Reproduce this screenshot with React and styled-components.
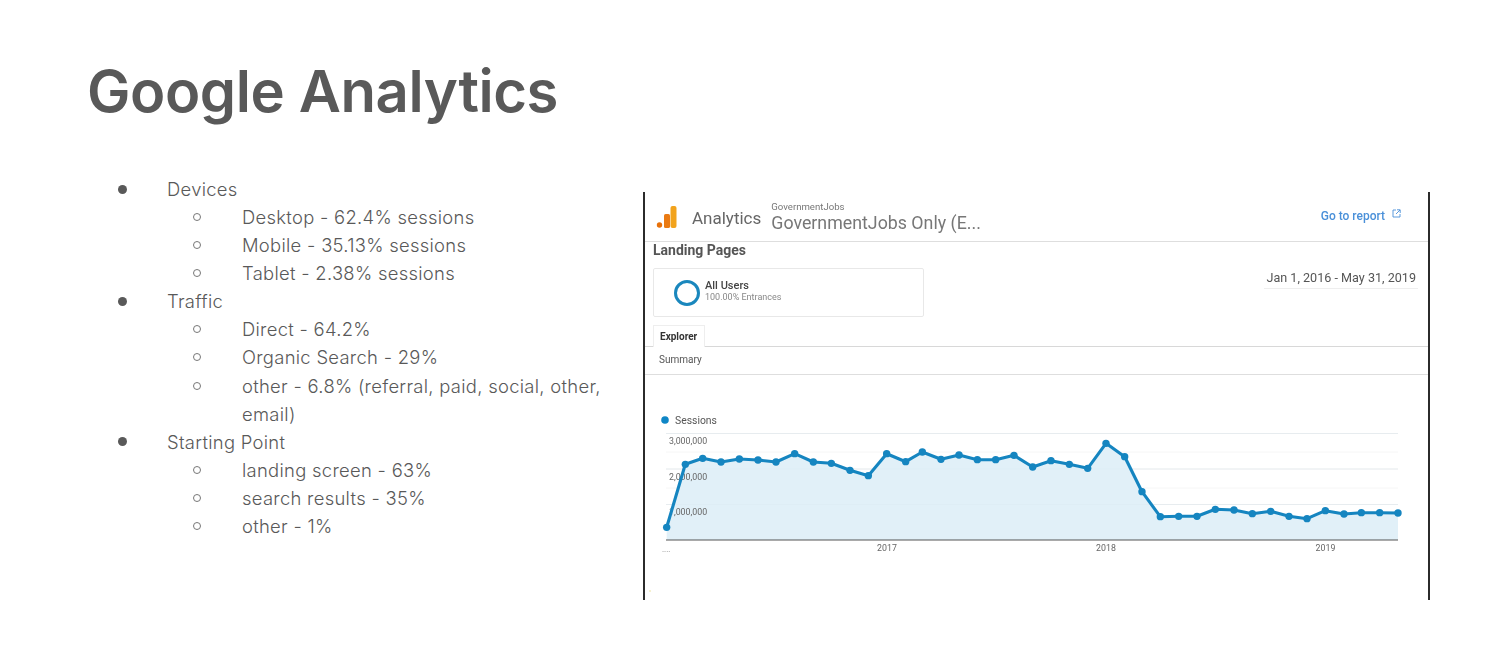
import React from "react";
import styled, { createGlobalStyle } from "styled-components";

const Global = createGlobalStyle`
  html, body { margin: 0; padding: 0; background: #fff; }
  body { font-family: "Inter", "Liberation Sans", sans-serif; color: #595959; }
`;

const Slide = styled.div`
  width: 1512px;
  height: 655px;
  overflow: hidden;
  display: flex;
  flex-direction: column;
  background: #fff;
`;

const Title = styled.h1`
  margin: 0;
  padding: 54px 0 0 87px;
  height: 175px;
  flex: none;
  box-sizing: border-box;
  font-size: 58px;
  line-height: 74px;
  font-weight: 600;
  letter-spacing: -0.4px;
  color: #595959;
`;

const Content = styled.div`
  display: flex;
  align-items: flex-start;
`;

const Outline = styled.ul`
  list-style: none;
  margin: 0;
  padding: 0 0 0 118px;
  width: 525px;
  flex: none;
  font-size: 18.4px;
  letter-spacing: 0.3px;
  font-weight: 300;
  line-height: 28.08px;
`;

const Row = styled.li`
  display: flex;
  padding-left: ${(p) => (p.$sub ? 75 : 0)}px;
`;

const MarkerSlot = styled.span`
  flex: none;
  width: 49px;
  height: 28px;
  display: flex;
  align-items: center;
`;

const Dot = styled.span`
  width: 9px;
  height: 9px;
  border-radius: 50%;
  background: #595959;
`;

const Ring = styled.span`
  width: 8px;
  height: 8px;
  box-sizing: border-box;
  border-radius: 50%;
  border: 1px solid #777;
`;

const RowText = styled.span`
  flex: 1;
`;

const Shot = styled.div`
  flex: none;
  width: 787px;
  height: 408px;
  margin-top: 17px;
  box-sizing: border-box;
  border-left: 2px solid #2b2b2b;
  border-right: 2px solid #2b2b2b;
  display: flex;
  flex-direction: column;
`;

const ShotInner = styled.div`
  flex: 1;
  display: flex;
  flex-direction: column;
  filter: blur(0.35px);
  min-height: 0;
`;

const Header = styled.div`
  flex: none;
  height: 50px;
  box-sizing: border-box;
  border-bottom: 1.5px solid #dedede;
  display: flex;
  align-items: center;
  padding: 0 27px 0 11px;
`;

const LogoName = styled.span`
  font-family: "Roboto", sans-serif;
  font-size: 17px;
  color: #666;
  margin: 3px 10px 0 14px;
`;

const Account = styled.div`
  display: flex;
  flex-direction: column;
  flex: 1;
  padding-top: 3px;
  font-family: "Roboto", sans-serif;
  color: #777;
`;

const AccountSmall = styled.span`
  font-size: 9.6px;
  line-height: 10px;
`;

const AccountBig = styled.span`
  font-size: 17.8px;
  line-height: 22px;
`;

const ReportLink = styled.span`
  font-family: "Roboto", sans-serif;
  font-size: 12px;
  font-weight: 500;
  color: #4a90d9;
  display: flex;
  align-items: flex-start;
  gap: 7px;
  line-height: 14px;
  padding-bottom: 2px;
`;

const LandingTitle = styled.div`
  flex: none;
  font-family: "Roboto", sans-serif;
  font-size: 14px;
  font-weight: 700;
  line-height: 16px;
  color: #555;
  padding-left: 8px;
`;

const SegmentRow = styled.div`
  flex: none;
  height: 49px;
  margin-top: 10px;
  display: flex;
  justify-content: space-between;
  align-items: flex-start;
  padding: 0 10px 0 8px;
`;

const SegmentCard = styled.div`
  width: 271px;
  height: 49px;
  box-sizing: border-box;
  border: 1px solid #e8e8e8;
  border-radius: 2px;
  display: flex;
  align-items: center;
  padding-left: 20px;
  gap: 5px;
  font-family: "Roboto", sans-serif;
`;

const SegmentRingShape = styled.span`
  width: 26px;
  height: 26px;
  box-sizing: border-box;
  border-radius: 50%;
  border: 3.5px solid #1a87bd;
`;

const SegmentText = styled.div`
  display: flex;
  flex-direction: column;
  padding-bottom: 4px;
`;

const SegmentName = styled.span`
  font-size: 11px;
  line-height: 12px;
  font-weight: 500;
  color: #444;
`;

const SegmentMeta = styled.span`
  font-size: 9px;
  line-height: 10px;
  color: #888;
`;

const DateRange = styled.div`
  font-family: "Roboto", sans-serif;
  font-size: 12.6px;
  line-height: 20px;
  color: #555;
  padding: 0 2px;
  border-bottom: 1.5px solid #eee;
`;

const Tabs = styled.div`
  flex: none;
  margin-top: 8px;
  height: 22px;
  box-sizing: border-box;
  border-bottom: 1.5px solid #d8d8d8;
  padding-left: 8px;
  display: flex;
`;

const Tab = styled.div`
  width: 52px;
  height: 22px;
  box-sizing: border-box;
  border: 1px solid #eee;
  border-bottom: 0;
  background: #fff;
  font-family: "Roboto", sans-serif;
  font-size: 10px;
  font-weight: 700;
  line-height: 21px;
  padding-left: 6px;
  color: #333;
`;

const SubTab = styled.div`
  flex: none;
  height: 28px;
  box-sizing: border-box;
  border-bottom: 1.5px solid #dedede;
  font-family: "Roboto", sans-serif;
  font-size: 10px;
  line-height: 25px;
  padding-left: 14px;
  color: #555;
`;

const Chart = styled.svg`
  display: block;
  flex: none;
  font-family: "Roboto", sans-serif;
`;

const items = [
  [0, "Devices"],
  [1, "Desktop - 62.4% sessions"],
  [1, "Mobile - 35.13% sessions"],
  [1, "Tablet - 2.38% sessions"],
  [0, "Traffic"],
  [1, "Direct - 64.2%"],
  [1, "Organic Search - 29%"],
  [1, "other - 6.8% (referral, paid, social, other, email)"],
  [0, "Starting Point"],
  [1, "landing screen - 63%"],
  [1, "search results - 35%"],
  [1, "other - 1%"],
];

const zoomA = [[80,382],[136,193],[188,175],[243,186],[298,177],[354,180],[408,186],[464,161],[520,186],[574,190],[630,211],[685,227],[740,161],[797,185],[847,156],[903,178],[957,165],[1012,179],[1067,179],[1122,166],[1178,201]];
const zoomB = [[33,182],[88,193],[143,205],[198,130],[254,170],[306,275],[361,350],[416,349],[471,349],[526,328],[582,330],[637,341],[692,334],[747,349],[801,356],[856,332],[912,342],[964,338],[1019,338],[1074,339]];
const pts = [
  ...zoomA.map(([x, y]) => [640 + x / 3, 400 + y / 3]),
  ...zoomB.map(([x, y]) => [1040 + x / 3, 400 + y / 3]),
];
const line = pts.map(([x, y]) => `${x.toFixed(1)},${y.toFixed(1)}`).join(" ");
const area = `666.7,540 ${line} 1398,540`;

const AnalyticsLogo = () => (
  <svg width="22" height="24" viewBox="0 0 22 24">
    <circle cx="3.5" cy="20" r="2.7" fill="#e8710a" />
    <rect x="8" y="9" width="6" height="14" rx="1.6" fill="#ea7a12" />
    <rect x="14.5" y="1" width="6" height="22" rx="2" fill="#f2a31c" />
  </svg>
);

const ExternalIcon = () => (
  <svg width="9" height="9" viewBox="0 0 9 9" fill="none" stroke="#4a90d9" strokeWidth="0.9">
    <path d="M4 1H1v7h7V5" />
    <path d="M5 .8h3.2V4M8 1 4 5" />
  </svg>
);

const gridMajor = [433.5, 469, 504.5];
const gridMinor = [452, 488, 523];
const axisLabels = [["3,000,000", 444], ["2,000,000", 480], ["1,000,000", 515]];
const years = [["2017", 887], ["2018", 1106], ["2019", 1325.5]];

export default function App() {
  return (
    <Slide>
      <Global />
      <Title>Google Analytics</Title>
      <Content>
        <Outline>
          {items.map(([sub, text]) => (
            <Row key={text} $sub={sub}>
              <MarkerSlot>{sub ? <Ring /> : <Dot />}</MarkerSlot>
              <RowText>{text}</RowText>
            </Row>
          ))}
        </Outline>
        <Shot>
          <ShotInner>
            <Header>
              <AnalyticsLogo />
              <LogoName>Analytics</LogoName>
              <Account>
                <AccountSmall>GovernmentJobs</AccountSmall>
                <AccountBig>GovernmentJobs Only (E...</AccountBig>
              </Account>
              <ReportLink>
                Go to report <ExternalIcon />
              </ReportLink>
            </Header>
            <LandingTitle>Landing Pages</LandingTitle>
            <SegmentRow>
              <SegmentCard>
                <SegmentRingShape />
                <SegmentText>
                  <SegmentName>All Users</SegmentName>
                  <SegmentMeta>100.00% Entrances</SegmentMeta>
                </SegmentText>
              </SegmentCard>
              <DateRange>Jan 1, 2016 - May 31, 2019</DateRange>
            </SegmentRow>
            <Tabs>
              <Tab>Explorer</Tab>
            </Tabs>
            <SubTab>Summary</SubTab>
            <Chart width="783" height="225" viewBox="645 375 783 225">
              <circle cx="665" cy="420" r="3.8" fill="#0f86c6" />
              <text x="675" y="424" fontSize="10.4" fill="#555">Sessions</text>
              {gridMajor.map((y) => (
                <line key={y} x1="666" x2="1398" y1={y} y2={y} stroke="#eeeeee" strokeWidth="1" />
              ))}
              {gridMinor.map((y) => (
                <line key={y} x1="666" x2="1398" y1={y} y2={y} stroke="#f6f6f6" strokeWidth="1" />
              ))}
              <polygon points={area} fill="#e1f0f8" />
              {gridMajor.map((y) => (
                <line key={y} x1="666" x2="1398" y1={y} y2={y} stroke="#d8e8f0" strokeWidth="0.6" opacity="0.6" />
              ))}
              {axisLabels.map(([t, y]) => (
                <text key={t} x="669" y={y} fontSize="8.8" fill="#666">{t}</text>
              ))}
              <line x1="666" x2="1398" y1="540" y2="540" stroke="#555" strokeWidth="1.2" />
              <polyline points={line} fill="none" stroke="#1585c0" strokeWidth="3.1" strokeLinejoin="round" />
              {pts.map(([x, y]) => (
                <circle key={x} cx={x} cy={y} r="3.7" fill="#1585c0" />
              ))}
              <text x="662" y="552" fontSize="8" fill="#888">....</text>
              {years.map(([t, x]) => (
                <text key={t} x={x} y="551" fontSize="8.8" fill="#666" textAnchor="middle">{t}</text>
              ))}
              <circle cx="650" cy="591" r="0.7" fill="#e6d77e" />
            </Chart>
          </ShotInner>
        </Shot>
      </Content>
    </Slide>
  );
}
